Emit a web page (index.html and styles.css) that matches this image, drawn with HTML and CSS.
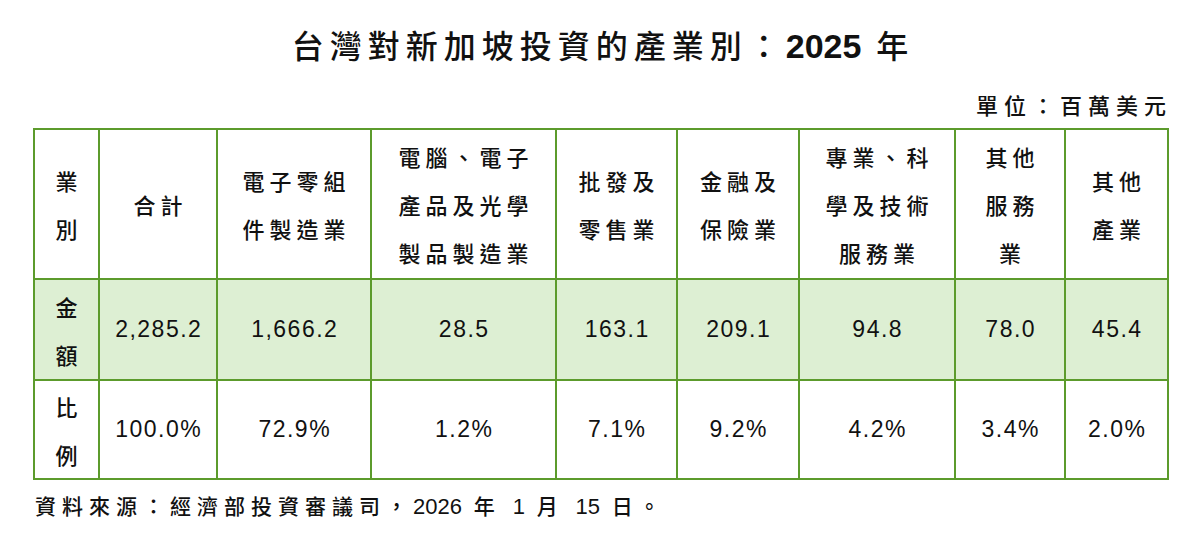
FILE: index.html
```html
<!DOCTYPE html>
<html lang="zh-Hant">
<head>
<meta charset="utf-8">
<title>台灣對新加坡投資的產業別：2025 年</title>
<link rel="stylesheet" href="styles.css">
</head>
<body>
<div class="page">
  <h1 class="title">台灣對新加坡投資的產業別：<span class="num">2025</span> 年</h1>
  <div class="unit">單位：百萬美元</div>
  <table class="data">
    <colgroup>
      <col style="width:65px"><col style="width:118px"><col style="width:154px"><col style="width:185px"><col style="width:121px"><col style="width:122px"><col style="width:156px"><col style="width:110px"><col style="width:103px">
    </colgroup>
    <tr class="head">
      <th class="zh">業<br>別</th>
      <th class="zh">合計</th>
      <th class="zh">電子零組<br>件製造業</th>
      <th class="zh">電腦、電子<br>產品及光學<br>製品製造業</th>
      <th class="zh">批發及<br>零售業</th>
      <th class="zh">金融及<br>保險業</th>
      <th class="zh">專業、科<br>學及技術<br>服務業</th>
      <th class="zh">其他<br>服務<br>業</th>
      <th class="zh">其他<br>產業</th>
    </tr>
    <tr class="amount">
      <th class="zh">金<br>額</th>
      <td>2,285.2</td>
      <td>1,666.2</td>
      <td>28.5</td>
      <td>163.1</td>
      <td>209.1</td>
      <td>94.8</td>
      <td>78.0</td>
      <td>45.4</td>
    </tr>
    <tr class="ratio">
      <th class="zh">比<br>例</th>
      <td>100.0%</td>
      <td>72.9%</td>
      <td>1.2%</td>
      <td>7.1%</td>
      <td>9.2%</td>
      <td>4.2%</td>
      <td>3.4%</td>
      <td>2.0%</td>
    </tr>
  </table>
  <p class="source">資料來源：經濟部投資審議司，<span class="num">2026</span> 年 <span class="num">1</span> 月 <span class="num">15</span> 日。</p>
</div>
</body>
</html>
```
FILE: styles.css
```css
html, body {
  margin: 0;
  padding: 0;
  background: #ffffff;
}

body {
  width: 1200px;
  height: 540px;
  overflow: hidden;
  color: #111111;
  font-family: "Liberation Sans", "Noto Sans CJK TC", sans-serif;
}

.page {
  display: flex;
  flex-direction: column;
  padding: 26px 33px 0 33px;
}

.title {
  margin: 0;
  font-size: 32px;
  line-height: 40px;
  font-weight: 500;
  letter-spacing: 6px;
  padding-left: 6px;
  text-align: center;
}

.title .num {
  font-size: 34px;
  font-weight: 700;
  letter-spacing: 0;
}

.unit {
  margin-top: 23px;
  margin-right: -5px;
  font-family: "Noto Sans CJK TC", sans-serif;
  font-size: 22px;
  line-height: 28px;
  font-weight: 500;
  letter-spacing: 6px;
  text-align: right;
}

.data {
  margin-top: 10px;
  width: 1134px;
  table-layout: fixed;
  border-collapse: collapse;
}

.data th,
.data td {
  border: 2px solid #5c9b2c;
  padding: 0;
  text-align: center;
  vertical-align: middle;
}

.data .zh {
  font-family: "Noto Sans CJK TC", sans-serif;
  font-size: 22px;
  line-height: 48px;
  font-weight: 500;
  letter-spacing: 5px;
  padding-left: 5px;
}

.data td {
  font-family: "Liberation Sans", sans-serif;
  font-size: 23px;
  letter-spacing: 1.5px;
  padding-left: 1.5px;
}

.head {
  height: 150px;
}

.amount {
  height: 101px;
  background: #ddefd3;
}

.ratio {
  height: 99px;
}

.source {
  margin: 13px 0 0 2px;
  font-size: 21px;
  line-height: 28px;
  font-weight: 500;
  letter-spacing: 6px;
}

.source .num {
  font-size: 22px;
  letter-spacing: 0;
}
```
